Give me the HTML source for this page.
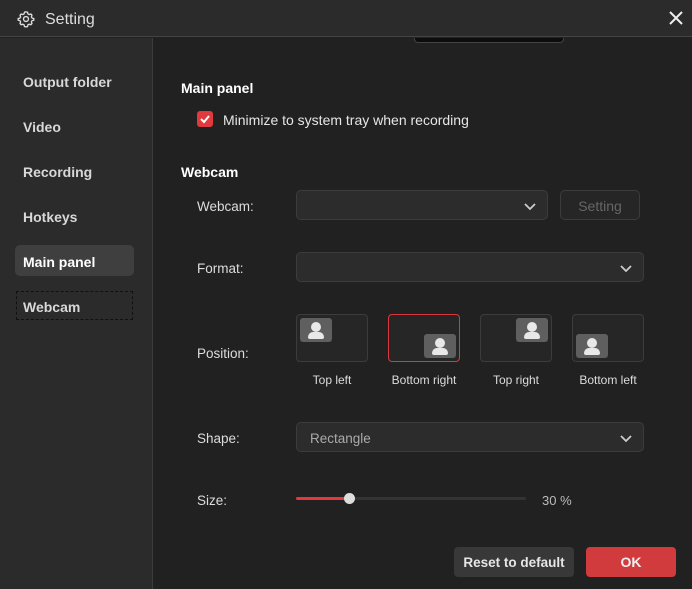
<!DOCTYPE html>
<html><head><meta charset="utf-8"><style>
*{box-sizing:border-box;margin:0;padding:0}
body{width:692px;height:589px;overflow:hidden;background:#212121;font-family:"Liberation Sans",sans-serif;color:#e6e6e6;position:relative}
.a{position:absolute}
.title{left:0;top:0;width:692px;height:37px;background:#2b2b2b;border-bottom:1px solid #444}
.side{left:0;top:38px;width:153px;height:551px;background:#2b2b2b;border-right:1px solid #3c3c3c}
.nav{left:23px;font-size:14px;font-weight:bold;color:#d8d8d8}
.lbl{font-size:13.5px;color:#dcdcdc}
.box{background:#2c2c2c;border:1px solid #3c3c3c;border-radius:5px}
.pos{width:72px;height:48px;border:1px solid #3c3c3c;border-radius:4px;background:#262626}
.cam{position:absolute;width:32px;height:24px;background:#5f5f5f;border-radius:3px}
.cam:before{content:"";position:absolute;left:11px;top:4px;width:10px;height:10px;border-radius:50%;background:#e8e8e8}
.cam:after{content:"";position:absolute;left:8px;top:14px;width:16px;height:7px;border-radius:5px 5px 2px 2px;background:#e8e8e8}
.cap{font-size:12px;color:#dcdcdc;text-align:center;width:100px}
.chev{position:absolute;right:10px;top:8px}
</style></head><body>
<div class="a title"></div>
<svg class="a" style="left:17px;top:10px" width="18" height="18" viewBox="0 0 24 24" fill="none" stroke="#ddd" stroke-width="1.8"><path d="M12 2.5l2 .4.6 2.3 1.6.9 2.3-.7 1.4 1.5-.7 2.3.9 1.6 2.3.6v2.2l-2.3.6-.9 1.6.7 2.3-1.4 1.5-2.3-.7-1.6.9-.6 2.3-2 .4-2-.4-.6-2.3-1.6-.9-2.3.7-1.4-1.5.7-2.3-.9-1.6-2.3-.6v-2.2l2.3-.6.9-1.6-.7-2.3 1.4-1.5 2.3.7 1.6-.9.6-2.3z"/><circle cx="12" cy="12" r="3.3"/></svg>
<div class="a" style="left:45px;top:11px;font-size:16px;color:#ddd">Setting</div>
<svg class="a" style="left:669px;top:11px" width="14" height="14" viewBox="0 0 14 14" stroke="#eee" stroke-width="2"><path d="M1 1L13 13M13 1L1 13"/></svg>
<div class="a" style="left:414px;top:38px;width:150px;height:5px;background:#0c0c0c;border:1px solid #444;border-top:none;border-radius:0 0 4px 4px"></div>
<div class="a side"></div>
<div class="a nav" style="top:74px">Output folder</div>
<div class="a nav" style="top:119px">Video</div>
<div class="a nav" style="top:164px">Recording</div>
<div class="a nav" style="top:209px">Hotkeys</div>
<div class="a" style="left:15px;top:245px;width:119px;height:31px;background:#3f3f3f;border-radius:5px"></div>
<div class="a nav" style="top:254px;color:#fff">Main panel</div>
<div class="a" style="left:16px;top:291px;width:117px;height:29px;border:1px dashed #111"></div>
<div class="a nav" style="top:299px">Webcam</div>

<div class="a" style="left:181px;top:80px;font-size:14px;font-weight:bold;color:#fff">Main panel</div>
<div class="a" style="left:197px;top:111px;width:16px;height:16px;background:#e0393e;border-radius:3px"></div>
<svg class="a" style="left:199px;top:113px" width="12" height="12" viewBox="0 0 12 12" fill="none" stroke="#fff" stroke-width="2"><path d="M2 6l3 3 5-6"/></svg>
<div class="a" style="left:223px;top:112px;font-size:14px;color:#e6e6e6">Minimize to system tray when recording</div>

<div class="a" style="left:181px;top:164px;font-size:14px;font-weight:bold;color:#fff">Webcam</div>
<div class="a lbl" style="left:197px;top:199px">Webcam:</div>
<div class="a box" style="left:296px;top:190px;width:252px;height:30px"><svg class="chev" width="14" height="14" viewBox="0 0 14 14" fill="none" stroke="#ccc" stroke-width="1.8"><path d="M2 5l5 5 5-5"/></svg></div>
<div class="a box" style="left:560px;top:190px;width:80px;height:30px;background:#262626;font-size:14px;color:#666;text-align:center;line-height:30px">Setting</div>
<div class="a lbl" style="left:197px;top:261px">Format:</div>
<div class="a box" style="left:296px;top:252px;width:348px;height:30px"><svg class="chev" width="14" height="14" viewBox="0 0 14 14" fill="none" stroke="#ccc" stroke-width="1.8"><path d="M2 5l5 5 5-5"/></svg></div>

<div class="a lbl" style="left:197px;top:346px">Position:</div>
<div class="a pos" style="left:296px;top:314px"><div class="cam" style="left:3px;top:3px"></div></div>
<div class="a pos" style="left:388px;top:314px;border-color:#d9393d"><div class="cam" style="right:3px;bottom:3px"></div></div>
<div class="a pos" style="left:480px;top:314px"><div class="cam" style="right:3px;top:3px"></div></div>
<div class="a pos" style="left:572px;top:314px"><div class="cam" style="left:3px;bottom:3px"></div></div>
<div class="a cap" style="left:282px;top:373px">Top left</div>
<div class="a cap" style="left:374px;top:373px">Bottom right</div>
<div class="a cap" style="left:466px;top:373px">Top right</div>
<div class="a cap" style="left:558px;top:373px">Bottom left</div>

<div class="a lbl" style="left:197px;top:431px">Shape:</div>
<div class="a box" style="left:296px;top:422px;width:348px;height:30px;font-size:13.5px;color:#aaa;padding:8px 0 0 13px">Rectangle<svg class="chev" width="14" height="14" viewBox="0 0 14 14" fill="none" stroke="#ccc" stroke-width="1.8"><path d="M2 5l5 5 5-5"/></svg></div>

<div class="a lbl" style="left:197px;top:493px">Size:</div>
<div class="a" style="left:296px;top:497px;width:230px;height:3px;background:#333;border-radius:2px"></div>
<div class="a" style="left:296px;top:497px;width:52px;height:3px;background:#e0393e;border-radius:2px"></div>
<div class="a" style="left:344px;top:493px;width:11px;height:11px;background:#ddd;border-radius:50%"></div>
<div class="a" style="left:542px;top:493px;font-size:13px;color:#bbb">30 %</div>

<div class="a" style="left:454px;top:547px;width:120px;height:30px;background:#383838;border-radius:4px;font-size:13.5px;font-weight:bold;color:#e6e6e6;text-align:center;line-height:31px">Reset to default</div>
<div class="a" style="left:586px;top:547px;width:90px;height:30px;background:#d13b3e;border-radius:4px;font-size:14px;font-weight:bold;color:#f0f0f0;text-align:center;line-height:31px">OK</div>
</body></html>
